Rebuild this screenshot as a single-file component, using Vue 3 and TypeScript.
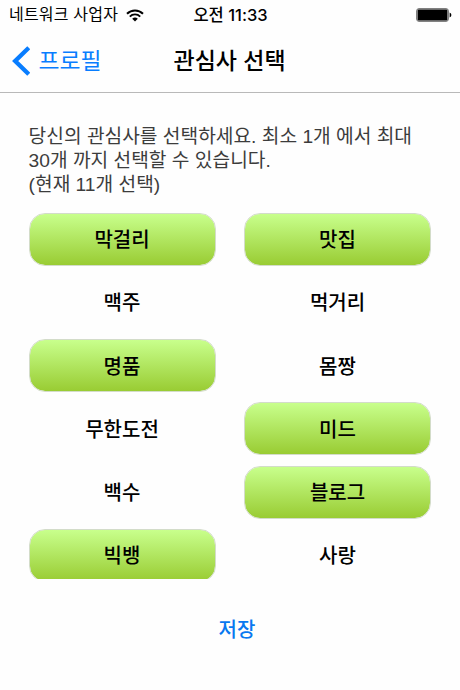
<script setup lang="ts">
import { ref } from 'vue'

interface Interest {
  name: string
  selected: boolean
}

const interests = ref<Interest[]>([
  { name: '막걸리', selected: true },
  { name: '맛집', selected: true },
  { name: '맥주', selected: false },
  { name: '먹거리', selected: false },
  { name: '명품', selected: true },
  { name: '몸짱', selected: false },
  { name: '무한도전', selected: false },
  { name: '미드', selected: true },
  { name: '백수', selected: false },
  { name: '블로그', selected: true },
  { name: '빅뱅', selected: true },
  { name: '사랑', selected: false },
])

function toggle(item: Interest): void {
  item.selected = !item.selected
}
</script>

<template>
  <div class="screen">
    <div class="status">
      <div class="carrier">
        <span class="carrier-name">네트워크 사업자</span>
        <svg class="wifi" viewBox="0 0 18 13" width="18" height="13">
          <path d="M1 4.7 A11.3 11.3 0 0 1 17 4.7" fill="none" stroke="#000" stroke-width="2" />
          <path d="M3.8 7.6 A7.3 7.3 0 0 1 14.2 7.6" fill="none" stroke="#000" stroke-width="1.9" />
          <path d="M9 12.6 L6.2 9.8 A4 4 0 0 1 11.8 9.8 Z" />
        </svg>
      </div>
      <div class="time">오전 11:33</div>
      <svg class="battery" viewBox="0 0 36 14" width="36" height="14">
        <rect x="0.6" y="0.6" width="31.8" height="12.8" rx="2.4" fill="#ddd" stroke="#666" stroke-width="0.9" />
        <rect x="1.6" y="1.6" width="29.8" height="10.8" rx="1.2" />
        <path d="M33.6 4.6 Q35.4 5.2 35.4 7 Q35.4 8.8 33.6 9.4 Z" />
      </svg>
    </div>

    <header class="nav">
      <button class="back" type="button">
        <svg viewBox="0 0 18 30" width="18" height="30">
          <path d="M16.8 1.7 L3.2 15 L16.8 28.3" fill="none" stroke="#087dff" stroke-width="4.4" />
        </svg>
        <span>프로필</span>
      </button>
      <h1 class="title">관심사 선택</h1>
    </header>

    <p class="guide">
      <span class="line">당신의 관심사를 선택하세요. 최소 1개 에서 최대</span>
      <span class="line">30개 까지 선택할 수 있습니다.</span>
      <span class="line">(현재 11개 선택)</span>
    </p>

    <div class="list">
      <button
        v-for="item in interests"
        :key="item.name"
        type="button"
        class="chip"
        :class="{ selected: item.selected }"
        @click="toggle(item)"
      >{{ item.name }}</button>
    </div>

    <button class="save" type="button">저장</button>
  </div>
</template>

<style>
body {
  background: #fefefe;
}
</style>

<style scoped>
.screen {
  width: 460px;
  height: 690px;
  overflow: hidden;
  background: #fefefe;
  color: #000;
  font-family: "Liberation Sans", "Noto Sans CJK KR", sans-serif;
}

button {
  margin: 0;
  padding: 0;
  border: 0;
  background: none;
  color: inherit;
  font: inherit;
}

.status {
  display: grid;
  grid-template-columns: 1fr auto 1fr;
  align-items: center;
  height: 30px;
  padding: 0 8px 0 9px;
  font-size: 16px;
  line-height: 30px;
  white-space: nowrap;
}

.carrier {
  display: flex;
  align-items: center;
  gap: 8px;
}

.carrier-name {
  letter-spacing: 0.2px;
}

.time {
  font-family: Inter, "Noto Sans CJK KR", sans-serif;
  font-size: 16.5px;
  font-weight: 500;
}

.battery {
  justify-self: end;
}

.nav {
  display: grid;
  grid-template-columns: 161.5px 1fr;
  align-items: center;
  box-sizing: border-box;
  height: 63px;
  padding: 0 0 1px 12px;
  border-bottom: 1px solid #b9b9b9;
}

.back {
  display: flex;
  align-items: center;
  gap: 8.5px;
  color: #087dff;
  font-size: 22.8px;
  line-height: 30px;
}

.title {
  margin: 0;
  font-size: 23px;
  font-weight: 500;
  line-height: 30px;
}

.guide {
  margin: 32px 0 0 28.6px;
  color: #3c3c3c;
  font-size: 19.2px;
  line-height: 24px;
}

.line {
  display: block;
  white-space: nowrap;
}

.list {
  display: grid;
  grid-template-columns: 187px 187px;
  grid-auto-rows: 53px;
  column-gap: 28.5px;
  row-gap: 10.3px;
  height: 366.5px;
  margin: 15.5px 28px 0 28.5px;
  overflow: hidden;
}

.chip {
  box-sizing: border-box;
  padding-top: 2px;
  border: 1px solid transparent;
  border-radius: 16px;
  font-size: 20px;
  font-weight: 500;
  line-height: 30px;
}

.chip.selected {
  border-color: #d3dcc9;
  background: linear-gradient(#c8ff8c, #99cc33) padding-box;
}

.save {
  display: block;
  margin: 36px 0 0 208.5px;
  padding: 0 10px;
  color: #0878f0;
  font-size: 20px;
  font-weight: 500;
  line-height: 30px;
}
</style>
